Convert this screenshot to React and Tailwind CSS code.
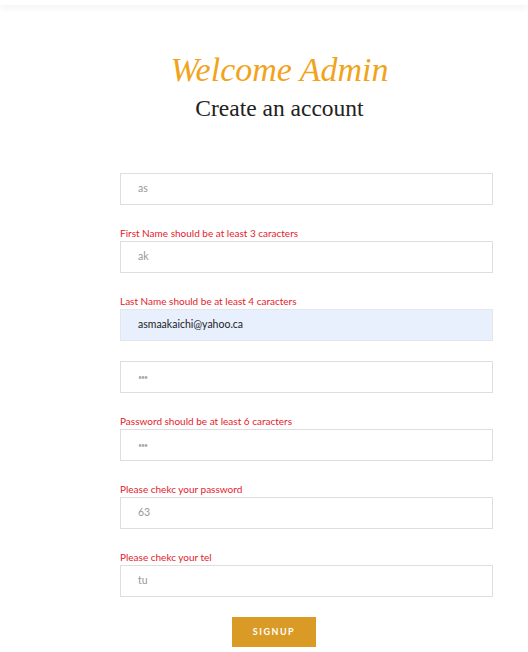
import React from 'react';

const fields = [
    { value: 'as', error: null },
    { value: 'ak', error: 'First Name should be at least 3 caracters' },
    { value: 'asmaakaichi@yahoo.ca', error: 'Last Name should be at least 4 caracters', filled: true },
    { value: '•••', error: null, dots: true },
    { value: '•••', error: 'Password should be at least 6 caracters', dots: true },
    { value: '63', error: 'Please chekc your password' },
    { value: 'tu', error: 'Please chekc your tel' },
];

export default function App() {
    return (
        <div className="min-h-[652px] bg-white" style={{ fontFamily: 'Lato, "Open Sans", sans-serif' }}>
            {/* barre du haut */}
            <div className="h-[5px] bg-white shadow-[0_3px_6px_rgba(0,0,0,0.06)]"></div>

            <div className="pl-[120px] pr-[35px]">
                <div className="w-[373px] -ml-[27px] text-center pt-[45px]">
                    <h1
                        className="text-[34px] leading-[40px] italic text-[#f2a31c]"
                        style={{ fontFamily: '"Liberation Serif", "DejaVu Serif", serif' }}
                    >
                        Welcome Admin
                    </h1>
                    <h2
                        className="text-[23.5px] leading-[28px] text-[#222] mt-[4px]"
                        style={{ fontFamily: '"Liberation Serif", "DejaVu Serif", serif' }}
                    >
                        Create an account
                    </h2>
                </div>

                <form className="mt-[51px] flex flex-col gap-[20px] w-[373px]">
                    {fields.map((f, i) => (
                        <div key={i} className="flex flex-col">
                            {f.error && (
                                <span className="text-[10px] leading-[16px] text-[#e5212b]">{f.error}</span>
                            )}
                            <div
                                className={
                                    'h-[32px] flex items-center pl-[17px] border ' +
                                    (f.filled ? 'bg-[#e8f0fe] border-[#e3e6ea]' : 'bg-white border-[#dedede]')
                                }
                            >
                                <span
                                    className={
                                        f.filled
                                            ? 'text-[10.5px] text-[#222]'
                                            : f.dots
                                            ? 'text-[7px] tracking-[-1px] text-[#aaa]'
                                            : 'text-[10.5px] text-[#999]'
                                    }
                                >
                                    {f.value}
                                </span>
                            </div>
                        </div>
                    ))}

                    <div className="flex pl-[112px]">
                        <button
                            type="button"
                            className="w-[84px] h-[30px] bg-[#d99a26] text-white text-[9px] font-bold tracking-[1.5px]"
                        >
                            SIGNUP
                        </button>
                    </div>
                </form>
            </div>
        </div>
    );
}
